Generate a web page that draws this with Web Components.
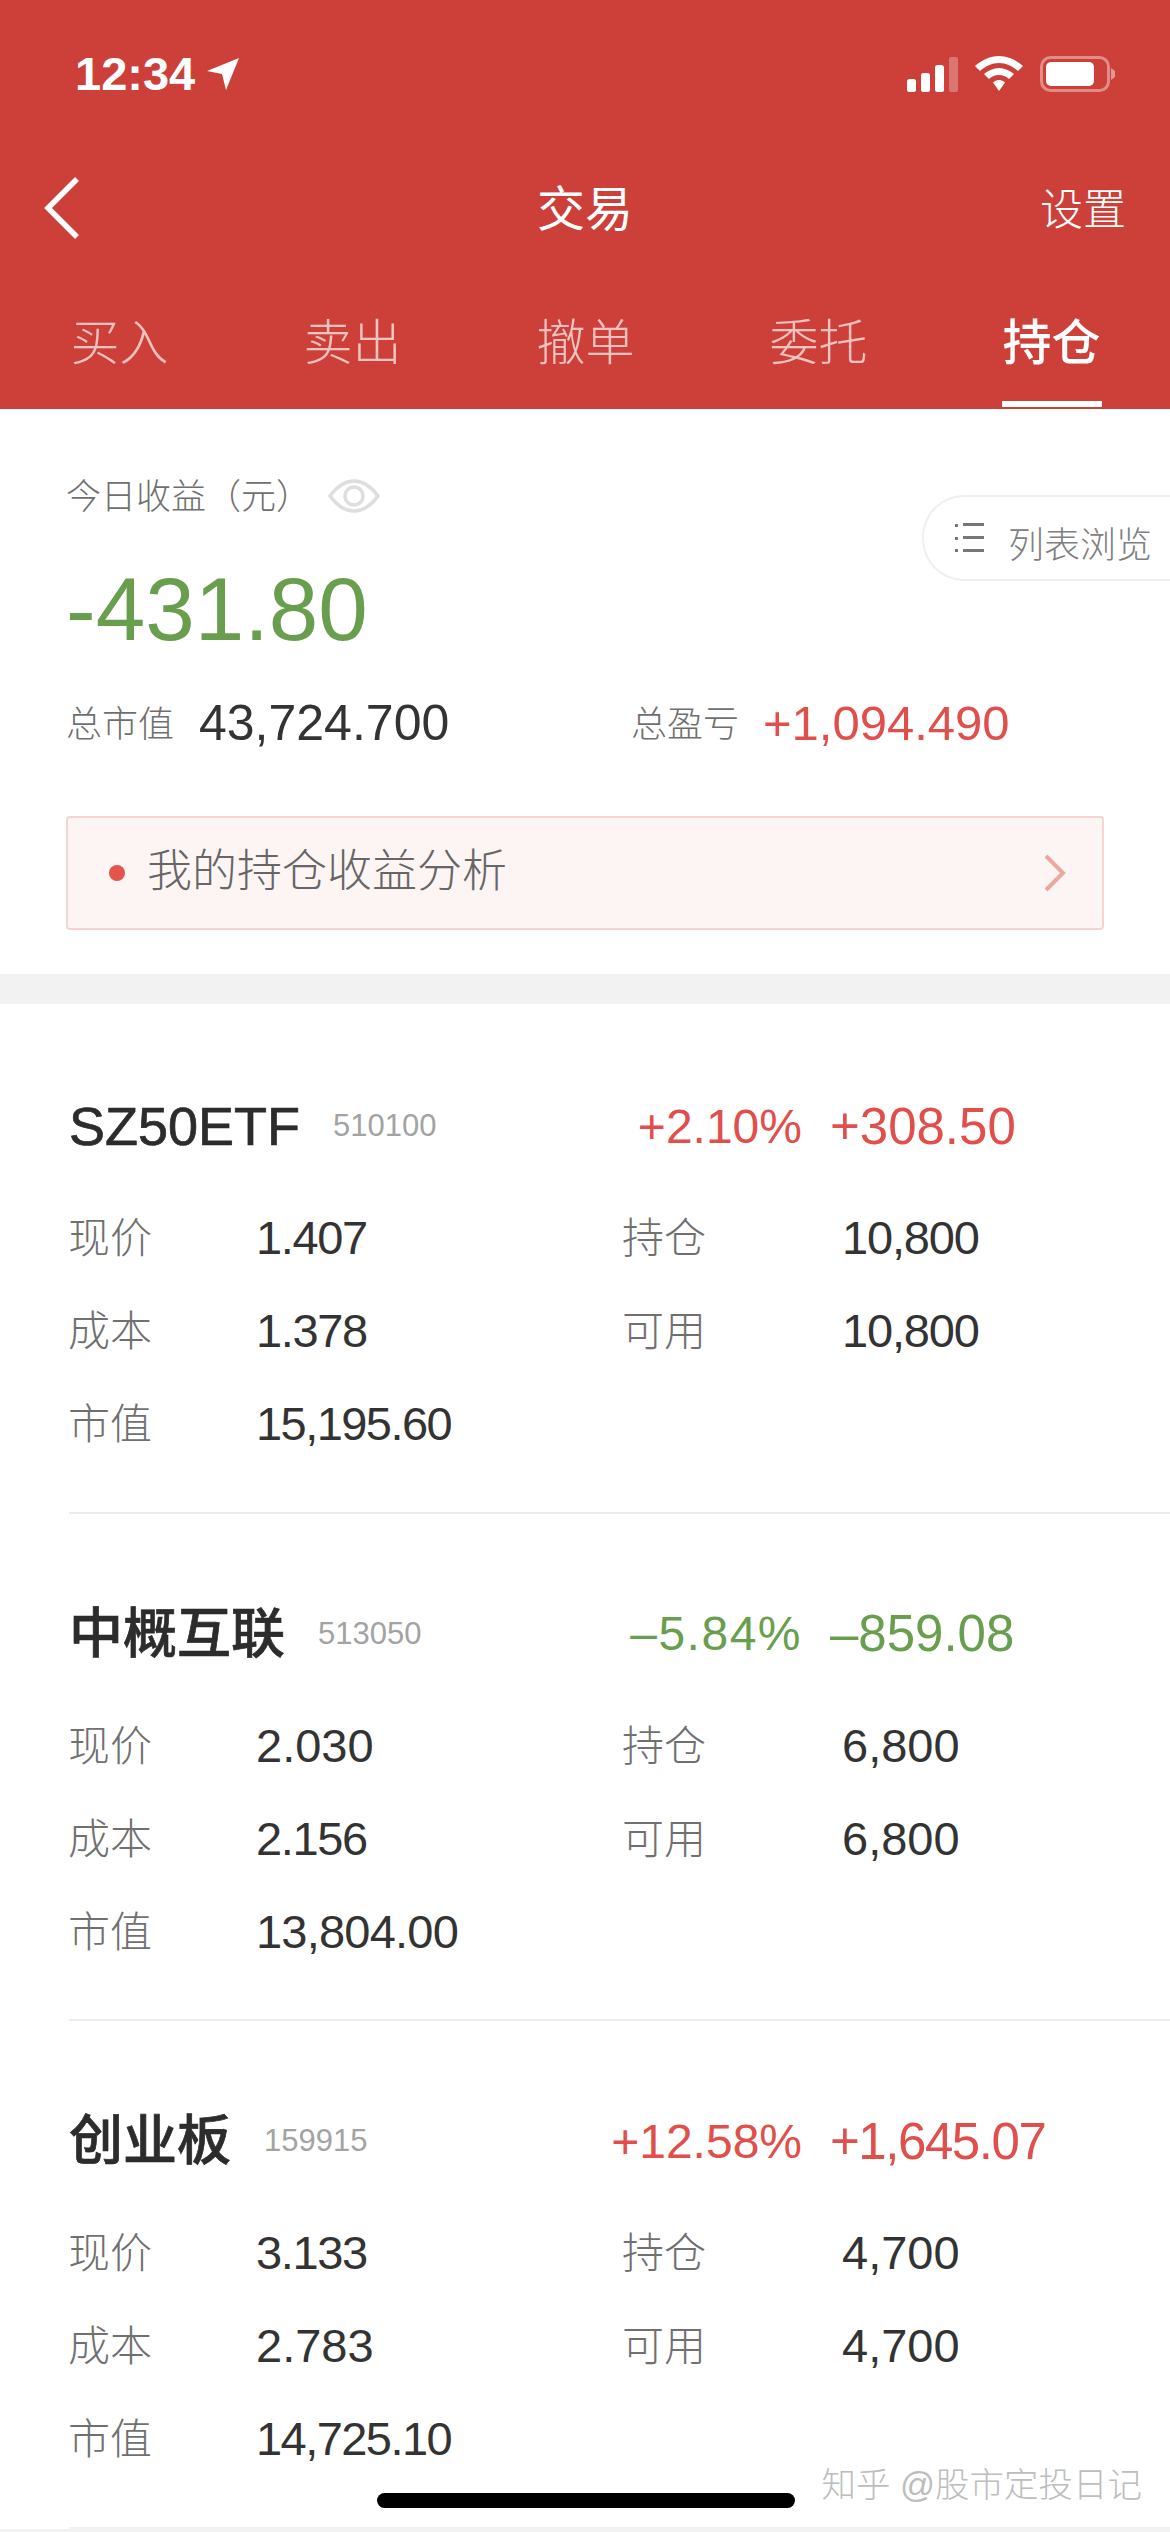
<!DOCTYPE html>
<html lang="zh">
<head>
<meta charset="utf-8">
<title>交易</title>
<style>
  html, body { margin: 0; padding: 0; background: #f2f2f2; }
  body { width: 1170px; height: 2532px; overflow: hidden; font-family: "Liberation Sans", "Noto Sans CJK SC", sans-serif; }
</style>
</head>
<body>
<trade-app>
  <status-bar slot="top" time="12:34"></status-bar>
  <nav-header slot="top" title="交易" action="设置">
    <nav-tab>买入</nav-tab>
    <nav-tab>卖出</nav-tab>
    <nav-tab>撤单</nav-tab>
    <nav-tab>委托</nav-tab>
    <nav-tab active>持仓</nav-tab>
  </nav-header>
  <summary-panel today="-431.80" total="43,724.700" profit="+1,094.490"></summary-panel>
  <stock-list>
  <stock-card name="SZ50ETF" code="510100" pct="+2.10%" amount="+308.50" tone="up">
    <stat-cell label="现价">1.407</stat-cell>
    <stat-cell label="持仓" side="right">10,800</stat-cell>
    <stat-cell label="成本">1.378</stat-cell>
    <stat-cell label="可用" side="right">10,800</stat-cell>
    <stat-cell label="市值">15,195.60</stat-cell>
  </stock-card>
  <stock-card name="中概互联" code="513050" pct="–5.84%" amount="–859.08" tone="down">
    <stat-cell label="现价">2.030</stat-cell>
    <stat-cell label="持仓" side="right">6,800</stat-cell>
    <stat-cell label="成本">2.156</stat-cell>
    <stat-cell label="可用" side="right">6,800</stat-cell>
    <stat-cell label="市值">13,804.00</stat-cell>
  </stock-card>
  <stock-card name="创业板" code="159915" pct="+12.58%" amount="+1,645.07" tone="up">
    <stat-cell label="现价">3.133</stat-cell>
    <stat-cell label="持仓" side="right">4,700</stat-cell>
    <stat-cell label="成本">2.783</stat-cell>
    <stat-cell label="可用" side="right">4,700</stat-cell>
    <stat-cell label="市值">14,725.10</stat-cell>
  </stock-card>
  </stock-list>
</trade-app>

<script>
const FONT = '"Liberation Sans", "Noto Sans CJK SC", sans-serif';

// the original font has a narrow "1", Liberation does not: tighten the whole number instead
const tighten = (text, px) => {
  const ones = text.split("1").length - 1;
  return (-px * ones / text.length).toFixed(2) + "px";
};

class TradeApp extends HTMLElement {
  constructor() {
    super();
    this.attachShadow({ mode: "open" });
    this.shadowRoot.innerHTML = `
      <style>
        :host { display: block; position: relative; width: 1170px; height: 2532px; overflow: hidden; background: #f2f2f2; }
        .top { background: #cc4039; }
        .home { position: absolute; left: 377px; top: 2493px; width: 418px; height: 15px; border-radius: 8px; background: #000; }
        .mark { position: absolute; right: 28px; top: 2464px; font: 300 34.500px/42px ${FONT}; color: #bdbdbd; white-space: nowrap; }
      </style>
      <div class="top"><slot name="top"></slot></div>
      <slot></slot>
      <div class="mark">知乎 @股市定投日记</div>
      <div class="home"></div>
    `;
  }
}

class StockList extends HTMLElement {
  constructor() {
    super();
    this.attachShadow({ mode: "open" });
    this.shadowRoot.innerHTML = `
      <style>
        :host { display: block; margin-top: 30px; padding-top: 2px; background: #fff; }
      </style>
      <slot></slot>
    `;
  }
}

class StatusBar extends HTMLElement {
  constructor() {
    super();
    this.attachShadow({ mode: "open" });
  }
  connectedCallback() {
    this.shadowRoot.innerHTML = `
      <style>
        :host { display: flex; align-items: center; justify-content: space-between; height: 148px; padding: 0 55px 0 75px; color: #fff; }
        .left { display: flex; align-items: center; gap: 12px; font: 700 47px/60px "Liberation Sans", sans-serif; }
        svg { display: block; }
      </style>
      <div class="left">
        <span>${this.getAttribute("time")}</span>
        <svg width="32" height="32" viewBox="0 0 32 32"><path fill="#fff" d="M32 0 L19 32 L15 16 L0 13 Z"/></svg>
      </div>
      <svg width="208" height="36" viewBox="0 0 208 36">
        <g fill="#fff">
          <rect x="0" y="23" width="9" height="13" rx="2.5"/>
          <rect x="14" y="17" width="9" height="19" rx="2.5"/>
          <rect x="28" y="9" width="9" height="27" rx="2.5"/>
          <rect x="42" y="1" width="9" height="35" rx="2" opacity=".28"/>
          <path d="M92 0 C101 0 109 4 116 10 L111 15 C105.500 10 99 7 92 7 C85 7 78.500 10 73 15 L68 10 C75 4 83 0 92 0 Z"/>
          <path d="M92 12 C97.500 12 102.500 14.500 107 18 L102 23 C99 20.500 96 19 92 19 C88 19 85 20.500 82 23 L77 18 C81.500 14.500 86.500 12 92 12 Z"/>
          <path d="M92 24 C94.500 24 96.500 25 98 26.500 L92 35 L86 26.500 C87.500 25 89.500 24 92 24 Z"/>
          <rect x="139" y="6" width="48" height="24" rx="5"/>
          <path d="M204 12 L208 15 V21 L204 24 Z" opacity=".45"/>
        </g>
        <rect x="134.500" y="1.500" width="67" height="33" rx="9" fill="none" stroke="#fff" stroke-opacity=".4" stroke-width="3"/>
      </svg>
    `;
  }
}

class NavHeader extends HTMLElement {
  constructor() {
    super();
    this.attachShadow({ mode: "open" });
  }
  connectedCallback() {
    this.shadowRoot.innerHTML = `
      <style>
        :host { display: block; color: #fff; }
        .bar { display: grid; grid-template-columns: 1fr auto 1fr; align-items: center; height: 120px; padding: 0 44px; }
        .title { padding-top: 3px; font: 400 48px/64px ${FONT}; }
        .action { justify-self: end; padding-top: 3px; font: 300 43px/60px ${FONT}; }
        svg { display: block; }
        .tabs { display: grid; grid-template-columns: repeat(5, 233px); padding-left: 3px; height: 141px; }
      </style>
      <div class="bar">
        <svg width="36" height="62" viewBox="0 0 36 62"><path d="M33 2 L4 31 L33 60" fill="none" stroke="#fff" stroke-width="5.500"/></svg>
        <div class="title">${this.getAttribute("title")}</div>
        <div class="action">${this.getAttribute("action")}</div>
      </div>
      <div class="tabs"><slot></slot></div>
    `;
  }
}

class NavTab extends HTMLElement {
  constructor() {
    super();
    this.attachShadow({ mode: "open" });
    this.shadowRoot.innerHTML = `
      <style>
        :host { display: flex; flex-direction: column; align-items: center; padding-top: 43px; color: rgba(255,255,255,.68); font: 300 49px/64px ${FONT}; }
        :host([active]) { color: #fff; font-weight: 500; }
        i { display: none; width: 100px; height: 6px; margin-top: 26px; background: #fff; }
        :host([active]) i { display: block; }
      </style>
      <span><slot></slot></span>
      <i></i>
    `;
  }
}

class SummaryPanel extends HTMLElement {
  constructor() {
    super();
    this.attachShadow({ mode: "open" });
  }
  connectedCallback() {
    this.shadowRoot.innerHTML = `
      <style>
        :host { display: block; position: relative; height: 565px; padding: 68px 66px 0; box-sizing: border-box; background: #fff; font-family: ${FONT}; }
        .label { display: flex; align-items: center; height: 40px; color: #6f6f6f; font-size: 35px; font-weight: 300; line-height: 40px; }
        .label svg { margin: -3px 0 0 17px; }
        .today { margin-top: 42px; color: #6a9e4f; font-size: 89px; line-height: 100px; }
        .totals { display: flex; height: 60px; margin-top: 34px; align-items: center; }
        .totals .k { color: #6f6f6f; font-size: 36px; font-weight: 300; width: 133px; flex: none; margin-top: -5px; }
        .totals .v { color: #333; font-size: 50px; width: 432px; flex: none; }
        .totals .k.b { width: 132px; }
        .totals .v.p { color: #e04f4b; font-size: 49px; width: auto; }
        .box { display: flex; align-items: center; height: 114px; margin: 63px 0 0; box-sizing: border-box; padding: 0 35px 0 41px; border: 2px solid #f6d3d0; border-radius: 4px; background: #fdf5f4; color: #666; font-size: 45px; font-weight: 300; }
        .box span { flex: 1; margin-top: -11px; }
        .dot { width: 16px; height: 16px; margin-right: 22px; border-radius: 50%; background: #e4544d; flex: none; }
        .pill { position: absolute; right: 0; top: 86px; display: flex; align-items: center; width: 248px; height: 86px; box-sizing: border-box; padding-left: 31px; border: 2px solid #efefef; border-right: 0; border-radius: 42px 0 0 42px; background: #fff; color: #808080; font-size: 36px; font-weight: 300; }
        .pill span { margin-top: 7px; }
        .pill svg { margin-right: 24px; flex: none; }
      </style>
      <div class="label">今日收益（元）
        <svg width="52" height="34" viewBox="0 0 52 34">
          <path d="M2 17 C10 6 17 2 26 2 C35 2 42 6 50 17 C42 28 35 32 26 32 C17 32 10 28 2 17 Z" fill="none" stroke="#dedede" stroke-width="3.500"/>
          <circle cx="26" cy="17" r="9" fill="none" stroke="#dedede" stroke-width="3.500"/>
        </svg>
      </div>
      <div class="today">${this.getAttribute("today")}</div>
      <div class="totals">
        <span class="k">总市值</span><span class="v">${this.getAttribute("total")}</span>
        <span class="k b">总盈亏</span><span class="v p">${this.getAttribute("profit")}</span>
      </div>
      <div class="box"><i class="dot"></i><span>我的持仓收益分析</span>
        <svg width="24" height="38" viewBox="0 0 24 38"><path d="M3 2 L20 19 L3 36" fill="none" stroke="#eba89f" stroke-width="4"/></svg>
      </div>
      <div class="pill">
        <svg width="29" height="30" viewBox="0 0 29 30">
          <g fill="#777"><rect x="0" y="1" width="3" height="3"/><rect x="8" y="0" width="21" height="3"/><rect x="0" y="14" width="3" height="3"/><rect x="8" y="13" width="21" height="3"/><rect x="0" y="26" width="3" height="3"/><rect x="8" y="26" width="21" height="3"/></g>
        </svg>
        <span>列表浏览</span>
      </div>
    `;
  }
}

class StockCard extends HTMLElement {
  constructor() {
    super();
    this.attachShadow({ mode: "open" });
  }
  connectedCallback() {
    const down = this.getAttribute("tone") === "down";
    const tone = down ? "#6a9e4f" : "#e04f4b";
    const amount = this.getAttribute("amount");
    this.shadowRoot.innerHTML = `
      <style>
        :host { display: block; margin-left: 69px; padding: 90px 0 41.500px; border-bottom: 2px solid #ececec; font-family: ${FONT}; }
        :host(:last-of-type) { border-bottom-color: #f2f2f2; }
        .head { display: flex; align-items: center; height: 60px; }
        .name { color: #2c2c2c; font-size: 54px; font-weight: 500; line-height: 60px; -webkit-text-stroke: .7px #2c2c2c; }
        .code { margin-left: 33px; color: #a3a3a3; font-size: 31px; }
        .pct { margin-left: auto; color: ${tone}; font-size: 48px; letter-spacing: ${down ? 1.5 : 0}px; }
        .amount { width: 340px; margin-left: 28px; color: ${tone}; font-size: 51px; letter-spacing: ${tighten(amount, 13)}; }
        .rows { display: grid; grid-template-columns: 554px 1fr; grid-auto-rows: 93px; margin-top: 35px; }
      </style>
      <div class="head">
        <span class="name">${this.getAttribute("name")}</span>
        <span class="code">${this.getAttribute("code")}</span>
        <span class="pct">${this.getAttribute("pct")}</span>
        <span class="amount">${amount}</span>
      </div>
      <div class="rows"><slot></slot></div>
    `;
  }
}

class StatCell extends HTMLElement {
  constructor() {
    super();
    this.attachShadow({ mode: "open" });
  }
  connectedCallback() {
    this.shadowRoot.innerHTML = `
      <style>
        :host { display: flex; align-items: center; font-family: ${FONT}; }
        .k { width: 188px; flex: none; margin: -6px 0 0 -1px; color: #707070; font-size: 42px; font-weight: 300; }
        :host([side="right"]) .k { width: 220px; }
        .v { color: #333; font-size: 47px; letter-spacing: ${tighten(this.textContent, 7)}; }
      </style>
      <span class="k">${this.getAttribute("label")}</span>
      <span class="v"><slot></slot></span>
    `;
  }
}

customElements.define("trade-app", TradeApp);
customElements.define("stock-list", StockList);
customElements.define("status-bar", StatusBar);
customElements.define("nav-header", NavHeader);
customElements.define("nav-tab", NavTab);
customElements.define("summary-panel", SummaryPanel);
customElements.define("stock-card", StockCard);
customElements.define("stat-cell", StatCell);
</script>
</body>
</html>
